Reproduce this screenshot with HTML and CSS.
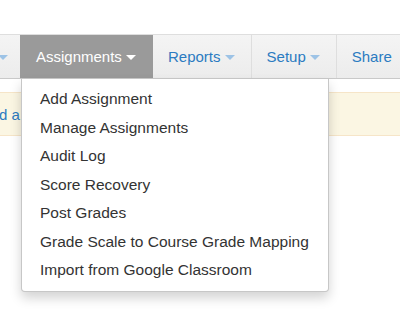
FILE: index.html
```html
<!DOCTYPE html>
<html lang="en">
<head>
    <meta charset="UTF-8">
    <title>Assignments menu</title>
    <link rel="stylesheet" href="styles.css">
</head>
<body>

    <nav class="navbar">
        <div class="nav-item nav-stub"><span class="caret"></span></div>

        <div class="nav-item active">
            Assignments<span class="caret"></span>
            <!-- open dropdown -->
            <ul class="dropdown">
                <li>Add Assignment</li>
                <li>Manage Assignments</li>
                <li>Audit Log</li>
                <li>Score Recovery</li>
                <li>Post Grades</li>
                <li>Grade Scale to Course Grade Mapping</li>
                <li>Import from Google Classroom</li>
            </ul>
        </div>

        <div class="nav-item">Reports<span class="caret"></span></div>
        <div class="nav-item">Setup<span class="caret"></span></div>
        <div class="nav-item">Share</div>
    </nav>

    <div class="notice">
        <a class="notice-link">d a</a>
    </div>

</body>
</html>
```

FILE: styles.css
```css
:root {
    --link: #2b7bc1;
    --caret-light: #9dc3e6;
    --text: #333;
    --nav-line: #dedede;
}

* { margin: 0; padding: 0; box-sizing: border-box; }

html { overflow: hidden; }

body {
    min-height: 100vh;
    background: #fff;
    font-family: "Liberation Sans", Arial, sans-serif;
    font-size: 15px;
    color: var(--text);
    padding-top: 34px;
}

.navbar {
    display: flex;
    height: 45px;
    background: linear-gradient(#f4f4f4, #ececec);
    border-top: 1px solid var(--nav-line);
    border-bottom: 1px solid #c9c9c9;
}

.nav-item {
    position: relative;
    flex-shrink: 0;
    display: flex;
    align-items: center;
    padding: 0 16px 0 15px;
    color: var(--link);
    border-right: 1px solid var(--nav-line);
    white-space: nowrap;
}

.nav-stub {
    width: 20px;
    padding: 0;
    border-right: none;
}

.nav-stub .caret {
    margin-left: -2px;
}

.nav-item.active {
    width: 133px;
    padding-left: 16px;
    background: #9a9a9a;
    color: #fff;
    border-right: none;
}

.caret {
    display: inline-block;
    width: 0;
    height: 0;
    margin-left: 4px;
    margin-top: 2px;
    border-top: 5px solid var(--caret-light);
    border-left: 5px solid transparent;
    border-right: 5px solid transparent;
}

.active .caret {
    border-top-color: #fff;
}

.dropdown {
    position: absolute;
    top: 44px;
    left: 1px;
    z-index: 10;
    width: 308px;
    padding: 6px 0;
    list-style: none;
    background: #fff;
    border: 1px solid rgba(0,0,0,0.22);
    border-top: none;
    border-radius: 0 0 4px 4px;
    box-shadow: 0 6px 12px rgba(0,0,0,0.175);
    color: var(--text);
    font-size: 15.5px;
}

.dropdown li {
    padding: 0 18px;
    line-height: 28.5px;
}

.notice {
    margin-top: 13px;
    height: 44px;
    display: flex;
    align-items: center;
    background: #fbf6e3;
    border-top: 1px solid #f6e5c8;
    border-bottom: 1px solid #f6e5c8;
    white-space: nowrap;
    overflow: hidden;
}

.notice-link {
    margin-left: -1px;
    color: var(--link);
}
```
